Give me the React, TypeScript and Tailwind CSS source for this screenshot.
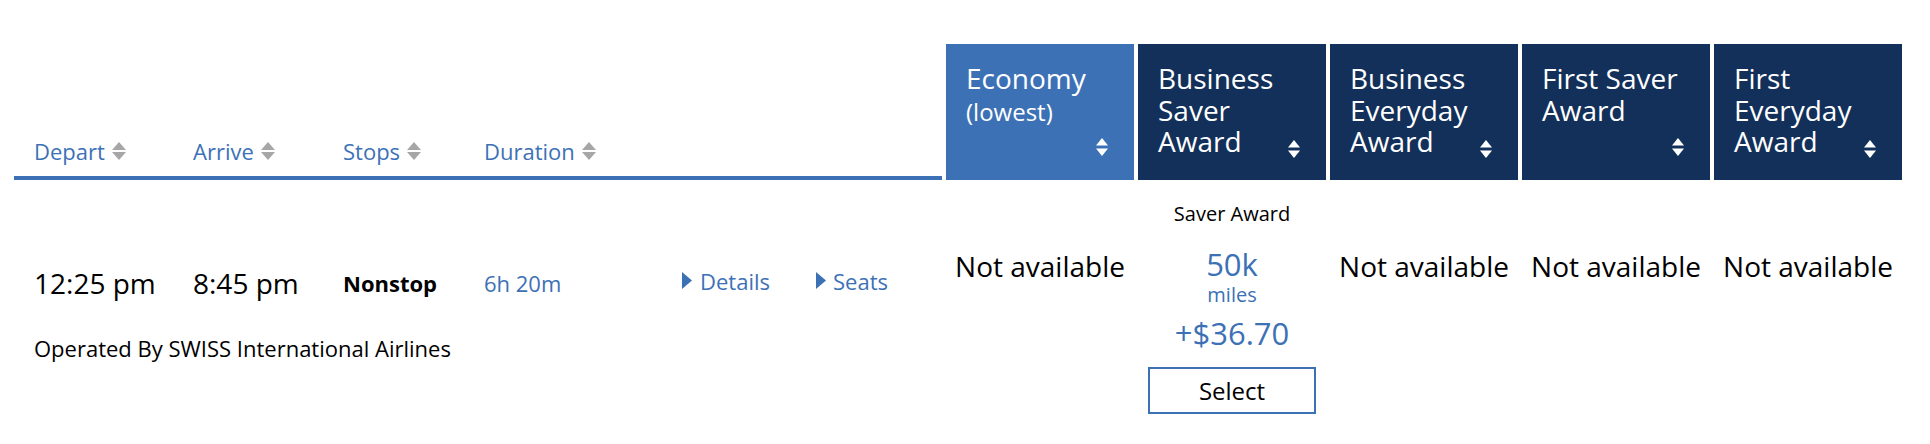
import React from "react";

function SortGray() {
  return (
    <svg width="14" height="18" viewBox="0 0 14 18" className="ml-[7px] shrink-0">
      <path d="M7 0L14 8H0Z" fill="#a6a6a6" />
      <path d="M0 10H14L7 18Z" fill="#a6a6a6" />
    </svg>
  );
}

function SortWhite() {
  return (
    <svg
      width="12"
      height="18"
      viewBox="0 0 12 18"
      className="col-start-1 row-start-1 self-end justify-self-end"
    >
      <path d="M6 0L12 7.5H0Z" fill="#ffffff" />
      <path d="M0 10.5H12L6 18Z" fill="#ffffff" />
    </svg>
  );
}

function Caret() {
  return (
    <svg width="10" height="17" viewBox="0 0 10 17" className="shrink-0">
      <path d="M0 0L10 8.5L0 17Z" fill="#3d71b6" />
    </svg>
  );
}

type Col = { title: React.ReactNode; bg: string; body: "na" | "award" };

const cols: Col[] = [
  {
    title: (
      <>
        Economy
        <br />
        <span className="text-[24px]">(lowest)</span>
      </>
    ),
    bg: "bg-[#3d71b6]",
    body: "na",
  },
  {
    title: (
      <>
        Business
        <br />
        Saver
        <br />
        Award
      </>
    ),
    bg: "bg-[#13305a]",
    body: "award",
  },
  {
    title: (
      <>
        Business
        <br />
        Everyday
        <br />
        Award
      </>
    ),
    bg: "bg-[#13305a]",
    body: "na",
  },
  {
    title: (
      <>
        First Saver
        <br />
        Award
      </>
    ),
    bg: "bg-[#13305a]",
    body: "na",
  },
  {
    title: (
      <>
        First
        <br />
        Everyday
        <br />
        Award
      </>
    ),
    bg: "bg-[#13305a]",
    body: "na",
  },
];

function HeaderLabel({ label }: { label: string }) {
  return (
    <div className="flex items-center text-[22px] leading-[30px] text-[#3d71b6]">
      <span>{label}</span>
      <SortGray />
    </div>
  );
}

export default function App() {
  return (
    <div className="w-[1930px] h-[444px] bg-white pt-[44px] pl-[14px] flex gap-[4px] font-['Open_Sans',sans-serif] text-black overflow-hidden">
      {/* Left flight info column */}
      <div className="w-[928px] shrink-0 flex flex-col">
        <div className="h-[136px] border-b-4 border-[#3d71b6] grid grid-cols-[159px_150px_141px_auto] items-end pl-[20px] pb-[10px]">
          <HeaderLabel label="Depart" />
          <HeaderLabel label="Arrive" />
          <HeaderLabel label="Stops" />
          <HeaderLabel label="Duration" />
        </div>
        <div className="pt-[82.5px]">
          <div className="grid grid-cols-[159px_150px_141px_198px_134px_auto] items-center pl-[20px] h-[40px]">
            <div className="text-[28px] leading-[40px]">12:25 pm</div>
            <div className="text-[28px] leading-[40px]">8:45 pm</div>
            <div className="text-[22px] leading-[40px] font-bold">Nonstop</div>
            <div className="text-[22px] leading-[40px] text-[#3d71b6]">6h 20m</div>
            <div className="flex items-center gap-[8px] mb-[4px] text-[22px] leading-[30px] text-[#3d71b6]">
              <Caret />
              <span>Details</span>
            </div>
            <div className="flex items-center gap-[7px] mb-[4px] text-[22px] leading-[30px] text-[#3d71b6]">
              <Caret />
              <span>Seats</span>
            </div>
          </div>
          <div className="pl-[20px] mt-[30.5px] text-[22px] leading-[30px]">
            Operated By SWISS International Airlines
          </div>
        </div>
      </div>

      {/* Fare columns */}
      {cols.map((c, i) => (
        <div key={i} className="w-[188px] shrink-0 flex flex-col">
          <div
            className={`grid h-[136px] pl-[20px] pr-[26px] pt-[19px] pb-[24px] ${c.bg}`}
          >
            <div className="col-start-1 row-start-1 self-start whitespace-nowrap text-[28px] leading-[31.5px] text-white">
              {c.title}
            </div>
            <SortWhite />
          </div>
          {c.body === "na" ? (
            <div className="pt-[66px] text-center text-[28px] leading-[40px] whitespace-nowrap">
              Not available
            </div>
          ) : (
            <div className="flex flex-col items-center pt-[22px]">
              <div className="text-[20px] leading-[24px]">Saver Award</div>
              <div className="mt-[18px] text-[31px] leading-[40px] text-[#3d71b6]">50k</div>
              <div className="text-[20px] leading-[22px] text-[#3d71b6]">miles</div>
              <div className="mt-[7px] text-[31px] leading-[40px] text-[#3d71b6]">+$36.70</div>
              <button className="mt-[14px] w-[168px] h-[47px] border-2 border-[#3d71b6] bg-white text-[24px] leading-[30px] text-black flex items-center justify-center">
                Select
              </button>
            </div>
          )}
        </div>
      ))}
    </div>
  );
}
